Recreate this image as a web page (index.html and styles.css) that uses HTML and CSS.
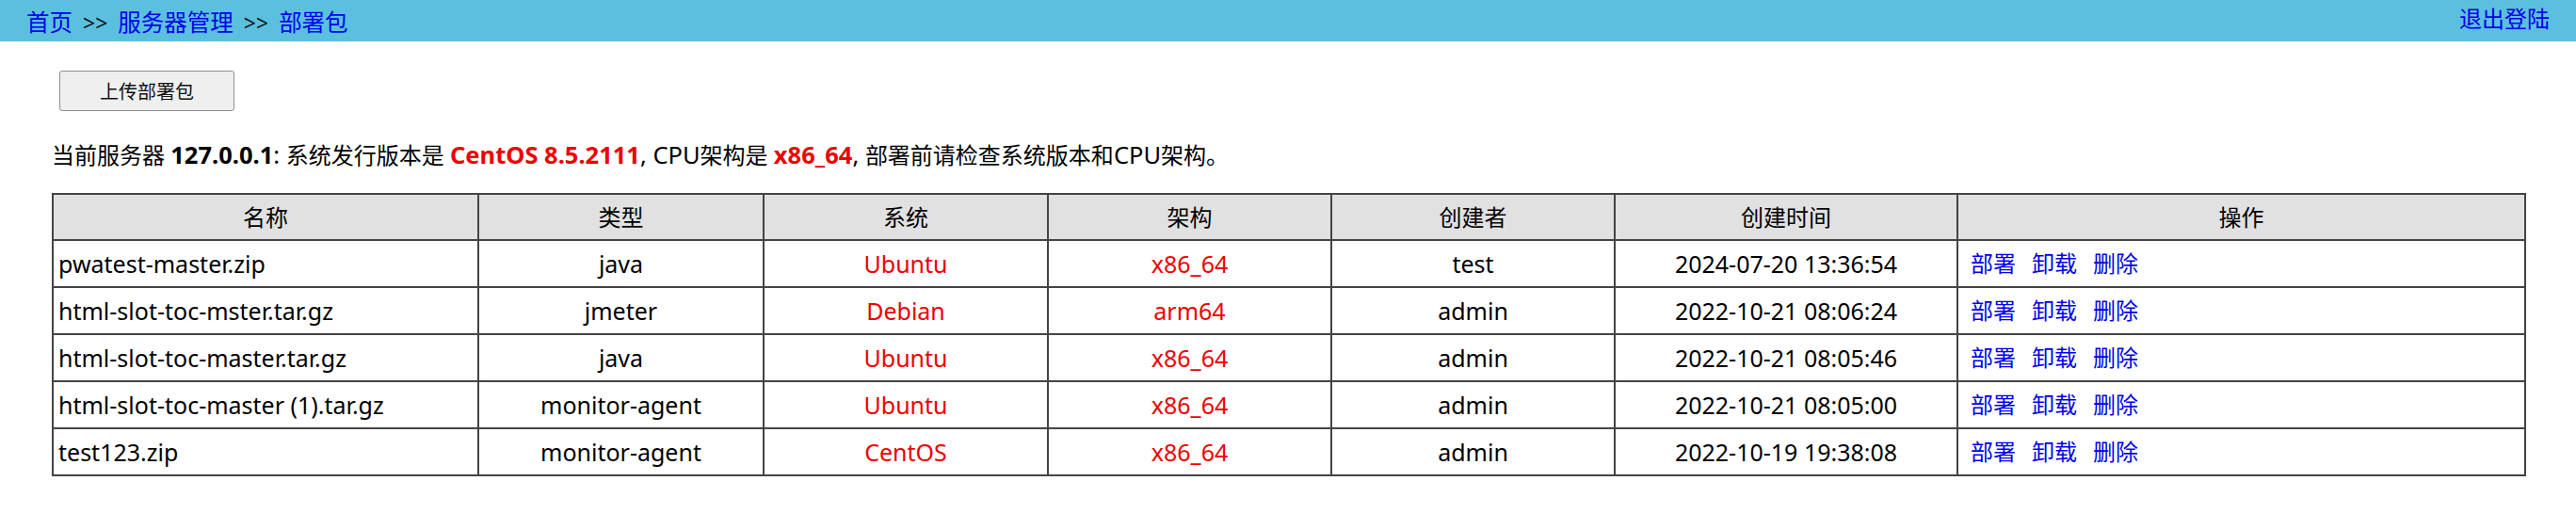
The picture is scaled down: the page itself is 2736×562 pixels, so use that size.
FILE: index.html
```html
<!DOCTYPE html>
<html lang="zh-CN">
<head>
<meta charset="utf-8">
<title>部署包</title>
<link rel="stylesheet" href="styles.css">
</head>
<body>
<header class="topbar">
  <nav class="crumbs">
    <a href="#" class="link">首页</a><span class="sep">&gt;&gt;</span><a href="#" class="link">服务器管理</a><span class="sep">&gt;&gt;</span><a href="#" class="link">部署包</a>
  </nav>
  <a href="#" class="link logout">退出登陆</a>
</header>
<main class="content">
  <div class="toolbar">
    <button class="btn" type="button">上传部署包</button>
  </div>
  <p class="info">当前服务器 <b class="lat">127.0.0.1</b><span class="lat">: </span>系统发行版本是 <b class="lat hl">CentOS 8.5.2111</b><span class="lat">, CPU</span>架构是 <b class="lat hl">x86_64</b><span class="lat">, </span>部署前请检查系统版本和<span class="lat">CPU</span>架构。</p>
  <table class="grid">
    <colgroup>
      <col class="c-name"><col class="c-type"><col class="c-sys"><col class="c-arch"><col class="c-user"><col class="c-time"><col class="c-ops">
    </colgroup>
    <thead>
      <tr><th>名称</th><th>类型</th><th>系统</th><th>架构</th><th>创建者</th><th>创建时间</th><th>操作</th></tr>
    </thead>
    <tbody>
      <tr><td class="left">pwatest-master.zip</td><td>java</td><td class="red">Ubuntu</td><td class="red">x86_64</td><td>test</td><td>2024-07-20 13:36:54</td><td class="ops"><a href="#" class="link">部署</a><a href="#" class="link">卸载</a><a href="#" class="link">删除</a></td></tr>
      <tr><td class="left">html-slot-toc-mster.tar.gz</td><td>jmeter</td><td class="red">Debian</td><td class="red">arm64</td><td>admin</td><td>2022-10-21 08:06:24</td><td class="ops"><a href="#" class="link">部署</a><a href="#" class="link">卸载</a><a href="#" class="link">删除</a></td></tr>
      <tr><td class="left">html-slot-toc-master.tar.gz</td><td>java</td><td class="red">Ubuntu</td><td class="red">x86_64</td><td>admin</td><td>2022-10-21 08:05:46</td><td class="ops"><a href="#" class="link">部署</a><a href="#" class="link">卸载</a><a href="#" class="link">删除</a></td></tr>
      <tr><td class="left">html-slot-toc-master (1).tar.gz</td><td>monitor-agent</td><td class="red">Ubuntu</td><td class="red">x86_64</td><td>admin</td><td>2022-10-21 08:05:00</td><td class="ops"><a href="#" class="link">部署</a><a href="#" class="link">卸载</a><a href="#" class="link">删除</a></td></tr>
      <tr><td class="left">test123.zip</td><td>monitor-agent</td><td class="red">CentOS</td><td class="red">x86_64</td><td>admin</td><td>2022-10-19 19:38:08</td><td class="ops"><a href="#" class="link">部署</a><a href="#" class="link">卸载</a><a href="#" class="link">删除</a></td></tr>
    </tbody>
  </table>
</main>
</body>
</html>
```

FILE: styles.css
```css
* { box-sizing: border-box; }

html, body {
  margin: 0;
  padding: 0;
  background: #ffffff;
  color: #000000;
  font-family: "Noto Sans", "Noto Sans CJK SC", sans-serif;
  font-size: 24px;
}

.link {
  color: #0000ee;
  text-decoration: none;
}

.topbar {
  height: 44px;
  background: #5bc0de;
  display: flex;
  justify-content: space-between;
  align-items: flex-start;
  padding: 0 28px;
}

.crumbs {
  line-height: 32px;
  padding-top: 8px;
  white-space: nowrap;
  font-size: 24.5px;
}

.sep {
  margin: 0 11px;
  color: #111;
  font-size: 23px;
}

.logout {
  line-height: 32px;
  padding-top: 4px;
}

.content {
  padding: 31px 55px 0 55px;
  display: flex;
  flex-direction: column;
}

.toolbar {
  padding-left: 8px;
}

.btn {
  width: 186px;
  height: 43px;
  font-family: "Noto Sans CJK SC", "Noto Sans", sans-serif;
  font-size: 20px;
  color: #111;
  background: #efefef;
  border: 1px solid #8f8f8f;
  border-radius: 3px;
  padding: 0;
}

.info {
  margin: 30px 0 24px 0;
  line-height: 32px;
  white-space: nowrap;
}

.info .lat { font-size: 25.5px; }
.info b { font-weight: 700; }
.info .hl { color: #ee0000; }

.grid {
  width: 100%;
  border-collapse: collapse;
  table-layout: fixed;
  border: 2px solid #444;
}

.c-name { width: 452px; }
.c-type { width: 303px; }
.c-sys  { width: 302px; }
.c-arch { width: 301px; }
.c-user { width: 301px; }
.c-time { width: 364px; }
.c-ops  { width: 603px; }

.grid th,
.grid td {
  border: 2px solid #444;
  padding: 0 5px;
  text-align: center;
  white-space: nowrap;
  line-height: 32px;
}

.grid th {
  height: 49px;
  background: #e1e1e1;
  font-weight: 400;
}

.grid td {
  height: 50px;
  font-size: 25px;
}

.grid td.left { text-align: left; }

.grid td.red { color: #ee0000; }

.grid td.ops {
  text-align: left;
  padding-left: 13px;
  font-size: 24px;
}

.ops .link { margin-right: 17px; }
```
